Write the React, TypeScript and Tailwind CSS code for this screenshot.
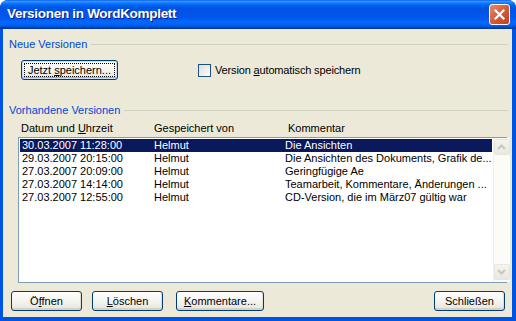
import React from "react";

const rows = [
  { date: "30.03.2007 11:28:00", by: "Helmut", note: "Die Ansichten" },
  { date: "29.03.2007 20:15:00", by: "Helmut", note: "Die Ansichten des Dokuments, Grafik de..." },
  { date: "27.03.2007 20:09:00", by: "Helmut", note: "Geringfügige Ae" },
  { date: "27.03.2007 14:14:00", by: "Helmut", note: "Teamarbeit, Kommentare, Änderungen ..." },
  { date: "27.03.2007 12:55:00", by: "Helmut", note: "CD-Version, die im März07 gültig war" },
];

const XPButton = ({ children, className = "" }: { children: React.ReactNode; className?: string }) => (
  <div
    className={`flex items-center justify-center h-[20px] rounded-[3px] border border-[#003C74] bg-gradient-to-b from-white via-[#F5F4EF] to-[#E6E4DB] shadow-[inset_0_-2px_0_#D8D2C6,inset_-1px_0_0_#E3DFD4] text-[11px] leading-[13px] text-black ${className}`}
  >
    {children}
  </div>
);

const GroupLabel = ({ text }: { text: string }) => (
  <div className="flex items-center h-[13px] pl-[6px] pr-[4px]">
    <span className="text-[11px] leading-[13px] text-[#0046D5] whitespace-nowrap">{text}</span>
    <div className="flex-1 h-px bg-[#D0D0BF] ml-[4px]" />
  </div>
);

const ScrollBtn = ({ up }: { up?: boolean }) => (
  <div className="w-[16px] h-[16px] rounded-[2px] border border-[#E8E6DC] bg-gradient-to-b from-[#F4F3EE] to-[#E9E8E0] flex items-center justify-center">
    <svg width="9" height="6" viewBox="0 0 9 6">
      <polyline
        points={up ? "1,5 4.5,1.5 8,5" : "1,1 4.5,4.5 8,1"}
        fill="none"
        stroke="#C9C7BA"
        strokeWidth="2"
      />
    </svg>
  </div>
);

export default function App() {
  return (
    <div className="w-[516px] h-[321px] flex flex-col rounded-t-[8px] overflow-hidden bg-[#0054E3] font-['Liberation_Sans',Arial,sans-serif]">
      {/* Title bar */}
      <div className="h-[29px] flex items-center justify-between pl-[7px] pr-[6px] bg-[linear-gradient(180deg,#0058EE_0%,#3A93FF_4%,#288EFF_7%,#127DFF_10%,#036FFC_14%,#0262EE_18%,#0057E5_24%,#0054E3_30%,#0055EB_56%,#005BF5_66%,#026AFE_76%,#0062EF_86%,#0052D6_92%,#0040AB_96%,#003092_100%)]">
        <span className="text-white font-bold text-[13.5px] tracking-[-0.3px] [text-shadow:1px_1px_0_#0A1883]">
          Versionen in WordKomplett
        </span>
        <div className="w-[21px] h-[21px] rounded-[3px] border border-white bg-gradient-to-br from-[#E9886B] via-[#D85A35] to-[#C23E18] flex items-center justify-center">
          <svg width="11" height="11" viewBox="0 0 11 11">
            <path d="M1.5 1.5 L9.5 9.5 M9.5 1.5 L1.5 9.5" stroke="white" strokeWidth="2.2" strokeLinecap="square" />
          </svg>
        </div>
      </div>

      {/* Body */}
      <div className="flex-1 ml-[3px] mr-[4px] mb-[4px] bg-[#ECE9D8] flex flex-col pt-[9px] text-[11px] leading-[13px] text-black">
        <GroupLabel text="Neue Versionen" />

        <div className="flex items-center mt-[9px]">
          <XPButton className="ml-[18px] w-[97px] shadow-[inset_0_0_0_1px_#C9DCF7,inset_0_-2px_0_#8FB0EA]">
            <span className="flex-1 self-stretch m-[3px] flex items-center justify-center outline outline-1 outline-dotted outline-black">
              Jetzt <u className="ml-[3px]">s</u>peichern...
            </span>
          </XPButton>
          <div className="ml-[80px] w-[13px] h-[13px] border border-[#1C5180] bg-gradient-to-br from-[#DCDCD7] to-white" />
          <span className="ml-[4px] tracking-[-0.15px]">
            Version <u>a</u>utomatisch speichern
          </span>
        </div>

        <div className="mt-[24px]">
          <GroupLabel text="Vorhandene Versionen" />
        </div>

        <div className="flex mt-[5px] pl-[18px] h-[13px]">
          <span className="w-[133px]">
            Datum und <u>U</u>hrzeit
          </span>
          <span className="w-[134px]">Gespeichert von</span>
          <span>Kommentar</span>
        </div>

        <div className="mt-[2px] ml-[15px] w-[489px] h-[146px] border border-[#7F9DB9] bg-white flex">
          <div className="flex-1 p-[1px]">
            {rows.map((r, i) => (
              <div
                key={i}
                className={`grid grid-cols-[134px_131px_1fr] h-[13px] leading-[13px] whitespace-nowrap ${
                  i === 0 ? "bg-[#0A185C] text-white" : "text-black"
                }`}
              >
                <span className="pl-[2px]">{r.date}</span>
                <span>{r.by}</span>
                <span>{r.note}</span>
              </div>
            ))}
          </div>
          <div className="w-[17px] bg-[#FBFBF8] flex flex-col justify-between items-center py-[1px] pb-[2px] border-l border-[#F0EFE8]">
            <ScrollBtn up />
            <ScrollBtn />
          </div>
        </div>

        <div className="flex mt-[8px] pl-[8px] pr-[7px]">
          <XPButton className="w-[71px]">
            <span>
              Ö<u>f</u>fnen
            </span>
          </XPButton>
          <XPButton className="w-[71px] ml-[10px]">
            <span>
              <u>L</u>öschen
            </span>
          </XPButton>
          <XPButton className="w-[88px] ml-[13px]">
            <span>
              <u>K</u>ommentare...
            </span>
          </XPButton>
          <XPButton className="w-[71px] ml-auto">Schließen</XPButton>
        </div>
      </div>
    </div>
  );
}
